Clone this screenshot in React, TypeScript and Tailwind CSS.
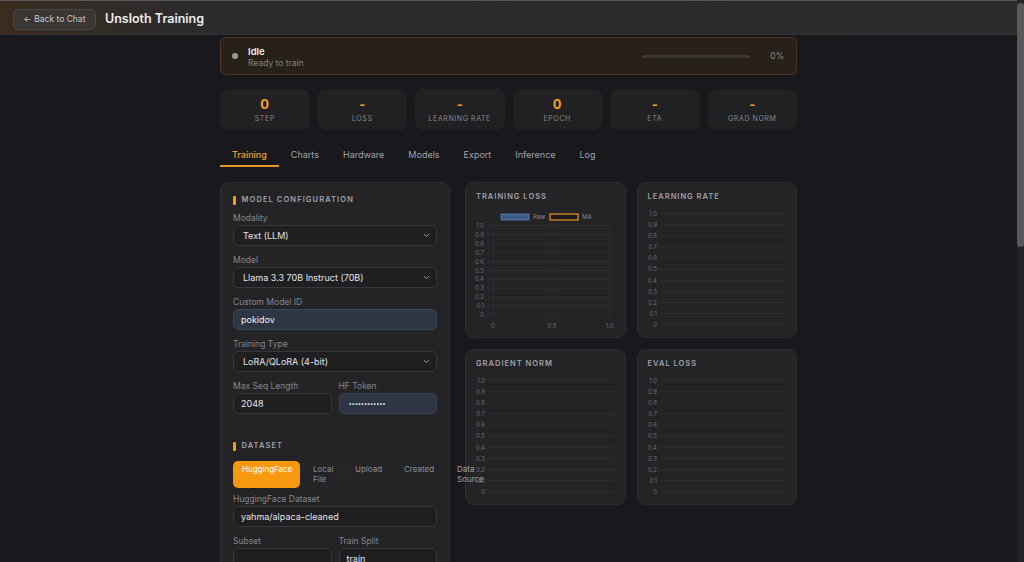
import React from "react";

const FONT = { fontFamily: "Inter, 'Noto Sans', 'Liberation Sans', sans-serif" };

function Chevron() {
  return (
    <svg width="7" height="7" viewBox="0 0 10 10" fill="none" className="shrink-0">
      <path d="M2 3.5 L5 6.5 L8 3.5" stroke="#a1a1aa" strokeWidth="1.4" strokeLinecap="round" strokeLinejoin="round" />
    </svg>
  );
}

function Label({ children }: { children: React.ReactNode }) {
  return <div className="h-[10px] text-[8.5px] leading-[10px] text-[#85858b]">{children}</div>;
}

function Select({ value }: { value: string }) {
  return (
    <div className="mt-[2px] flex h-[21px] w-full items-center justify-between rounded-[5px] border border-[#37373b] bg-[#1f1f22] pl-[9px] pr-[6px] text-[9px] text-[#e4e4e7]">
      <span>{value}</span>
      <Chevron />
    </div>
  );
}

function Input({ value, filled, secret }: { value: string; filled?: boolean; secret?: boolean }) {
  return (
    <div
      className={
        filled
          ? "mt-[2px] flex h-[21px] w-full items-center rounded-[5px] border border-[#3b4558] bg-[#2e3646] px-[7px] text-[9px] text-[#f4f4f5]"
          : "mt-[2px] flex h-[21px] w-full items-center rounded-[5px] border border-[#37373b] bg-[#1f1f22] px-[7px] text-[9px] text-[#e4e4e7]"
      }
    >
      {secret ? <span className="pl-[2px] text-[6px] tracking-[-0.3px]">{value}</span> : value}
    </div>
  );
}

function SectionTitle({ children }: { children: React.ReactNode }) {
  return (
    <div className="flex h-[10px] items-center gap-[6px]">
      <div className="h-[9px] w-[2.5px] rounded-[1px] bg-[#f59e0b]" />
      <div className="text-[7.5px] font-semibold leading-[10px] tracking-[1.1px] text-[#a1a1aa]">{children}</div>
    </div>
  );
}

const TICKS = ["1.0", "0.9", "0.8", "0.7", "0.6", "0.5", "0.4", "0.3", "0.2", "0.1", "0"];

// Empty line chart with y grid 0..1; optional x axis and legend for the loss chart
function EmptyChart({ withLegend }: { withLegend?: boolean }) {
  if (withLegend) {
    const top = 24.7;
    const step = 8.93;
    const xs = [27, 86, 144];
    return (
      <svg width="160" height="138" viewBox="0 0 160 138" className="block">
        <rect x="35" y="13" width="28" height="6" fill="#3e5b86" stroke="#5b80b8" strokeWidth="0.8" />
        <text x="67" y="18.2" fontSize="6" fill="#8a8a90">Raw</text>
        <rect x="84" y="13" width="28" height="6" fill="#1d1d20" stroke="#e8952b" strokeWidth="1.2" />
        <text x="116" y="18.2" fontSize="6" fill="#8a8a90">MA</text>
        {TICKS.map((t, i) => (
          <g key={t}>
            <text x="18" y={top + i * step + 2.2} fontSize="6" fill="#6b6b72" textAnchor="end">{t}</text>
            <line x1="21" x2="144" y1={top + i * step} y2={top + i * step} stroke="#313135" strokeWidth="0.8" />
          </g>
        ))}
        {xs.map((x) => (
          <line key={x} x1={x} x2={x} y1={top} y2={top + 10 * step + 3} stroke="#313135" strokeWidth="0.8" />
        ))}
        <text x="27" y="126.8" fontSize="6" fill="#6b6b72" textAnchor="middle">0</text>
        <text x="86" y="126.8" fontSize="6" fill="#6b6b72" textAnchor="middle">0.5</text>
        <text x="144" y="126.8" fontSize="6" fill="#6b6b72" textAnchor="middle">1.0</text>
      </svg>
    );
  }
  const top = 12.7;
  const step = 11.1;
  return (
    <svg width="160" height="138" viewBox="0 0 160 138" className="block">
      {TICKS.map((t, i) => (
        <g key={t}>
          <text x="19" y={top + i * step + 2.2} fontSize="6" fill="#6b6b72" textAnchor="end">{t}</text>
          <line x1="22" x2="149" y1={top + i * step} y2={top + i * step} stroke="#313135" strokeWidth="0.8" />
        </g>
      ))}
    </svg>
  );
}

function ChartCard({ title, legend }: { title: string; legend?: boolean }) {
  return (
    <div className="h-[156px] overflow-hidden rounded-lg border border-[#2c2c30] bg-[#242427] pt-[10px]" style={FONT}>
      <div className="h-[8px] px-[10px] text-[7.5px] font-semibold leading-[8px] tracking-[1px] text-[#a1a1aa]">{title}</div>
      <EmptyChart withLegend={legend} />
    </div>
  );
}

const STATS = [
  { v: "0", l: "STEP" },
  { v: "-", l: "LOSS" },
  { v: "-", l: "LEARNING RATE" },
  { v: "0", l: "EPOCH" },
  { v: "-", l: "ETA" },
  { v: "-", l: "GRAD NORM" },
];

const TABS = ["Training", "Charts", "Hardware", "Models", "Export", "Inference", "Log"];

export default function App() {
  return (
    <div className="flex h-[562px] w-[1024px] overflow-hidden bg-[#19191d]" style={FONT}>
      <div className="flex h-full w-[1017px] flex-col">
        {/* Top bar */}
        <header className="flex h-[35px] shrink-0 items-center gap-[9px] border-t border-b border-t-[#58585c] border-b-[#333336] bg-gradient-to-r from-[#3a2c1f] via-[#2c2b2c] via-[18%] to-[#2b2b2d] pl-[13px] pt-[3px]">
          <button className="flex h-[21px] w-[83px] items-center justify-center gap-[3px] rounded-[5px] border border-[#4a4643] bg-[#3a3633] text-[8.5px] text-[#c9c9cc]">
            <span className="text-[8px]">←</span>
            <span>Back to Chat</span>
          </button>
          <h1 className="text-[12.5px] font-semibold text-[#ededee]">Unsloth Training</h1>
        </header>

        <main className="mx-auto mt-[2px] w-[577px]">
          {/* Status */}
          <div className="flex h-[38px] items-center rounded-md border border-[#4a3920] bg-[#28211a] pl-[11px] pr-[12px]">
            <div className="h-[6px] w-[6px] rounded-full bg-[#9a9a9e]" />
            <div className="ml-[10px] flex flex-col pt-[2px]">
              <span className="text-[9.5px] font-semibold leading-[12px] text-[#f2f2f3]">Idle</span>
              <span className="text-[8.5px] leading-[11px] text-[#85817b]">Ready to train</span>
            </div>
            <div className="ml-auto h-[3px] w-[108px] rounded-full bg-[#3b3631]" />
            <span className="ml-[20px] text-[8.5px] text-[#8c8882]">0%</span>
          </div>

          {/* Stats */}
          <div className="mt-[14px] grid grid-cols-6 gap-2">
            {STATS.map((s) => (
              <div key={s.l} className="flex h-[41px] flex-col items-center rounded-lg bg-[#212124] pt-[7px]">
                <span className="text-[13px] font-bold leading-[16px] text-[#f2a02a]">{s.v}</span>
                <span className="mt-[2px] text-[7px] leading-[9px] tracking-[0.6px] text-[#86868c]">{s.l}</span>
              </div>
            ))}
          </div>

          {/* Tabs */}
          <div className="mt-[15px] flex h-[22px]">
            {TABS.map((t, i) => (
              <div
                key={t}
                className={
                  i === 0
                    ? "flex items-center border-b-2 border-[#e8912a] px-3 text-[9px] font-medium text-[#f0a030]"
                    : "flex items-center border-b-2 border-transparent px-3 text-[9px] text-[#a1a1aa]"
                }
              >
                {t}
              </div>
            ))}
          </div>

          {/* Content */}
          <div className="mt-[15px] flex gap-[15px]">
            {/* Configuration panel */}
            <div className="w-[230px] shrink-0 rounded-lg border border-[#2c2c30] bg-[#242427] px-[12px] pb-[20px] pt-[12px]">
              <SectionTitle>MODEL CONFIGURATION</SectionTitle>
              <div className="mt-[8px] flex flex-col gap-[9px]">
                <div>
                  <Label>Modality</Label>
                  <Select value="Text (LLM)" />
                </div>
                <div>
                  <Label>Model</Label>
                  <Select value="Llama 3.3 70B Instruct (70B)" />
                </div>
                <div>
                  <Label>Custom Model ID</Label>
                  <Input value="pokidov" filled />
                </div>
                <div>
                  <Label>Training Type</Label>
                  <Select value="LoRA/QLoRA (4-bit)" />
                </div>
                <div className="grid grid-cols-2 gap-[7px]">
                  <div>
                    <Label>Max Seq Length</Label>
                    <Input value="2048" />
                  </div>
                  <div>
                    <Label>HF Token</Label>
                    <Input value="••••••••••••" filled secret />
                  </div>
                </div>
              </div>

              <div className="mt-[27px]">
                <SectionTitle>DATASET</SectionTitle>
              </div>
              <div className="mt-[10px] flex h-[27px] gap-[4px]">
                <div className="w-[67px] shrink-0 rounded-[5px] bg-[#f7990f] pl-[9px] pt-[4px] text-[8px] leading-[9.5px] text-white">HuggingFace</div>
                <div className="w-[38px] shrink-0 rounded-[5px] border border-[#28282c] pl-[8px] pt-[3px] text-[8px] leading-[9.5px] text-[#8e8e94]">Local File</div>
                <div className="w-[45px] shrink-0 rounded-[5px] border border-[#28282c] pl-[8px] pt-[3px] text-[8px] leading-[9.5px] text-[#8e8e94]">Upload</div>
                <div className="w-[49px] shrink-0 rounded-[5px] border border-[#28282c] pl-[8px] pt-[3px] text-[8px] leading-[9.5px] text-[#8e8e94]">Created</div>
                <div className="relative z-10 w-[42px] shrink-0 pl-[9px] pt-[4px] text-[8px] leading-[9.5px] text-[#a1a1a6]">Data Source</div>
              </div>

              <div className="mt-[6px] flex flex-col gap-[9px]">
                <div>
                  <Label>HuggingFace Dataset</Label>
                  <Input value="yahma/alpaca-cleaned" />
                </div>
                <div className="grid grid-cols-2 gap-[7px]">
                  <div>
                    <Label>Subset</Label>
                    <Input value="" />
                  </div>
                  <div>
                    <Label>Train Split</Label>
                    <Input value="train" />
                  </div>
                </div>
              </div>
            </div>

            {/* Charts */}
            <div className="grid w-[332px] shrink-0 grid-cols-2 content-start gap-[11px]">
              <ChartCard title="TRAINING LOSS" legend />
              <ChartCard title="LEARNING RATE" />
              <ChartCard title="GRADIENT NORM" />
              <ChartCard title="EVAL LOSS" />
            </div>
          </div>
        </main>
      </div>

      {/* Scrollbar */}
      <div className="flex h-full w-[7px] flex-col bg-[#232325] pt-[3px]">
        <div className="h-[244px] w-full rounded-[3px] bg-[#58585b]" />
      </div>
    </div>
  );
}
